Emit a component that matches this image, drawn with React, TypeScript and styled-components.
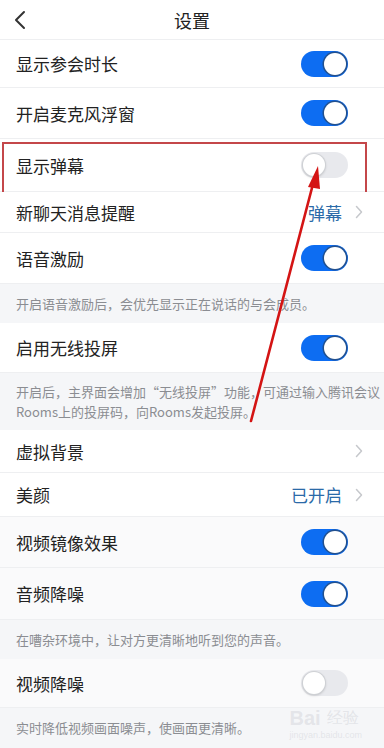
import React from "react";
import styled, { createGlobalStyle } from "styled-components";

const GlobalStyle = createGlobalStyle`
  html, body {
    margin: 0;
    padding: 0;
    background: #f5f6f8;
  }
  body {
    font-family: "Noto Sans CJK SC", "Noto Sans", sans-serif;
    -webkit-font-smoothing: antialiased;
  }
`;

type Item =
  | { kind: "toggle"; label: string; on: boolean; h: number; tint?: boolean; mark?: boolean }
  | { kind: "link"; label: string; value?: string; h: number; tint?: boolean }
  | { kind: "note"; lines: string[]; h: number };

const ITEMS: Item[] = [
  { kind: "toggle", label: "显示参会时长", on: true, h: 48 },
  { kind: "toggle", label: "开启麦克风浮窗", on: true, h: 51 },
  { kind: "toggle", label: "显示弹幕", on: false, h: 53, mark: true },
  { kind: "link", label: "新聊天消息提醒", value: "弹幕", h: 41 },
  { kind: "toggle", label: "语音激励", on: true, h: 51 },
  { kind: "note", lines: ["开启语音激励后，会优先显示正在说话的与会成员。"], h: 39 },
  { kind: "toggle", label: "启用无线投屏", on: true, h: 50 },
  {
    kind: "note",
    lines: [
      "开启后，主界面会增加\u201C无线投屏\u201D功能，可通过输入腾讯会议",
      "Rooms上的投屏码，向Rooms发起投屏。",
    ],
    h: 57,
  },
  { kind: "link", label: "虚拟背景", h: 43 },
  { kind: "link", label: "美颜", value: "已开启", h: 44 },
  { kind: "toggle", label: "视频镜像效果", on: true, h: 51, tint: true },
  { kind: "toggle", label: "音频降噪", on: true, h: 52, tint: true },
  { kind: "note", lines: ["在嘈杂环境中，让对方更清晰地听到您的声音。"], h: 39 },
  { kind: "toggle", label: "视频降噪", on: false, h: 49, tint: true },
  { kind: "note", lines: ["实时降低视频画面噪声，使画面更清晰。"], h: 40 },
];

const App = () => {
  return (
    <Page>
      <GlobalStyle />
      <Header>
        <BackButton aria-label="返回">
          <svg width="12" height="20" viewBox="0 0 12 20">
            <path d="M10 2 L2 10 L10 18" fill="none" stroke="#333" strokeWidth="2" strokeLinecap="round" strokeLinejoin="round" />
          </svg>
        </BackButton>
        <Title>设置</Title>
      </Header>

      {ITEMS.map((item, i) => {
        if (item.kind === "note") {
          return (
            <Note key={i} $h={item.h}>
              {item.lines.map((l) => (
                <span key={l}>{l}</span>
              ))}
            </Note>
          );
        }
        return (
          <Row key={i} $h={item.h} $tint={item.tint}>
            <Label>{item.label}</Label>
            {item.kind === "toggle" ? (
              <Switch $on={item.on}>
                <Knob $on={item.on} />
              </Switch>
            ) : (
              <Trail>
                {item.value && <Value>{item.value}</Value>}
                <svg width="8" height="14" viewBox="0 0 8 14">
                  <path d="M1.5 1.5 L6.5 7 L1.5 12.5" fill="none" stroke="#c6c8cc" strokeWidth="1.5" strokeLinecap="round" strokeLinejoin="round" />
                </svg>
              </Trail>
            )}
            {item.kind === "toggle" && item.mark && <MarkBox />}
          </Row>
        );
      })}

      <Arrow width="384" height="748" viewBox="0 0 384 748">
        <line x1="251" y1="421" x2="313" y2="184" stroke="#d41414" strokeWidth="2.6" strokeLinecap="round" />
        <polygon points="318,166 308,187 320,189" fill="#d41414" />
      </Arrow>

      <Watermark>
        <strong>Bai</strong>
        <em>经验</em>
        <small>jingyan.baidu.com</small>
      </Watermark>
    </Page>
  );
};

export default App;

const Page = styled.div`
  position: relative;
  width: 384px;
  height: 748px;
  overflow: hidden;
  background: #f5f6f8;
`;

const Header = styled.div`
  height: 40px;
  display: flex;
  align-items: center;
  justify-content: center;
  position: relative;
  background: #fff;
  border-bottom: 1px solid #eeeff1;
  box-sizing: border-box;
`;

const BackButton = styled.button`
  position: absolute;
  left: 14px;
  top: 10px;
  border: 0;
  padding: 0;
  background: transparent;
  display: flex;
`;

const Title = styled.div`
  font-size: 18px;
  color: #222;
`;

const Row = styled.div<{ $h: number; $tint?: boolean }>`
  position: relative;
  height: ${(p) => p.$h}px;
  box-sizing: border-box;
  display: flex;
  align-items: center;
  justify-content: space-between;
  padding: 0 36px 0 16px;
  background: ${(p) => (p.$tint ? "#fafafb" : "#fff")};
  border-bottom: 1px solid #eeeff1;
`;

const Label = styled.span`
  font-size: 17px;
  color: #222;
`;

const Switch = styled.div<{ $on: boolean }>`
  width: 47px;
  height: 26px;
  border-radius: 13px;
  background: ${(p) => (p.$on ? "#0d6df2" : "#e8e9ed")};
  display: flex;
  align-items: center;
  justify-content: ${(p) => (p.$on ? "flex-end" : "flex-start")};
  padding: 0 2px;
  box-sizing: border-box;
`;

const Knob = styled.div<{ $on: boolean }>`
  width: 22px;
  height: 22px;
  border-radius: 50%;
  background: #fff;
  box-shadow: ${(p) =>
    p.$on
      ? "0 0 0 1.5px #21508f"
      : "0 0 0 1px #cfd1d5, 0 1px 3px rgba(0, 0, 0, 0.25)"};
`;

const Trail = styled.div`
  display: flex;
  align-items: center;
  gap: 13px;
  margin-right: -15px;
`;

const Value = styled.span`
  font-size: 17px;
  color: #2b6aa8;
`;

const Note = styled.div<{ $h: number }>`
  height: ${(p) => p.$h}px;
  box-sizing: border-box;
  padding: 0 16px;
  display: flex;
  flex-direction: column;
  justify-content: center;
  font-size: 13px;
  line-height: 20px;
  color: #8b8d92;
  background: #f5f6f8;
  white-space: nowrap;
`;

const MarkBox = styled.div`
  position: absolute;
  left: 2px;
  right: 17px;
  top: 3px;
  bottom: -6px;
  border: 2px solid #c4474a;
  pointer-events: none;
`;

const Arrow = styled.svg`
  position: absolute;
  left: 0;
  top: 0;
  pointer-events: none;
`;

const Watermark = styled.div`
  position: absolute;
  right: 22px;
  bottom: 8px;
  display: grid;
  grid-template-columns: auto auto;
  column-gap: 4px;
  color: rgba(200, 202, 208, 0.4);
  font-family: "Liberation Sans", sans-serif;

  strong {
    font-size: 20px;
    font-weight: 700;
  }
  em {
    font-style: normal;
    font-size: 16px;
    align-self: center;
  }
  small {
    grid-column: 1 / 3;
    font-size: 9px;
    text-align: right;
  }
`;
